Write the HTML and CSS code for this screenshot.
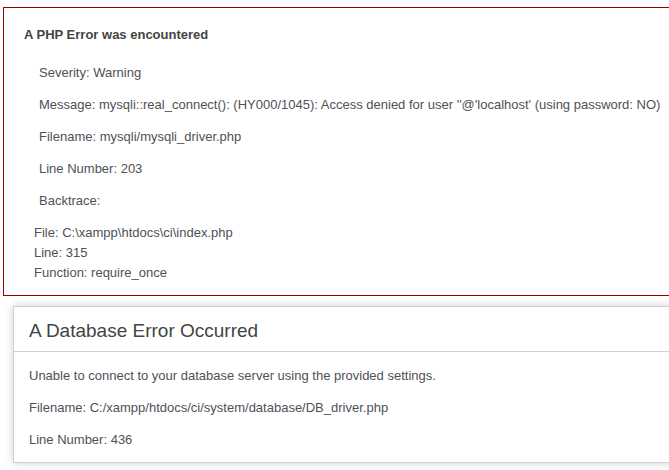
FILE: index.html
```html
<!DOCTYPE html>
<html>

<head>
    <meta charset="utf-8" />
    <title>Database Error</title>
    <link rel="stylesheet" href="styles.css">
</head>

<body>
    <div class="page">
        <div class="php-error">
            <h4>A PHP Error was encountered</h4>
            <p>Severity: Warning</p>
            <p>Message: mysqli::real_connect(): (HY000/1045): Access denied for user ''@'localhost' (using password: NO)</p>
            <p>Filename: mysqli/mysqli_driver.php</p>
            <p>Line Number: 203</p>
            <p>Backtrace:</p>
            <p class="trace-item">
                File: C:\xampp\htdocs\ci\index.php<br />
                Line: 315<br />
                Function: require_once
            </p>
        </div>
        <div id="container">
            <h1>A Database Error Occurred</h1>
            <p>Unable to connect to your database server using the provided settings.</p>
            <p>Filename: C:/xampp/htdocs/ci/system/database/DB_driver.php</p>
            <p>Line Number: 436</p>
        </div>
    </div>
</body>

</html>
```

FILE: styles.css
```css
html,
body {
    overflow: hidden;
}

body {
    background-color: #fff;
    margin: 7px 0 0 3px;
    font: 13px/20px "Liberation Sans", Arial, Helvetica, sans-serif;
    color: #4F5155;
}

.page {
    width: 720px;
}

.php-error {
    border: 1px solid #990000;
    padding-left: 20px;
    margin: 0 0 10px 0;
}

.php-error h4 {
    color: #444;
    margin: 17px 0 18px 0;
}

p {
    margin: 12px 15px 12px 15px;
}

.php-error .trace-item {
    margin-left: 10px;
}

h1 {
    color: #444;
    background-color: transparent;
    border-bottom: 1px solid #D0D0D0;
    font-size: 19px;
    font-weight: normal;
    margin: 0 0 14px 0;
    padding: 14px 15px 10px 15px;
}

#container {
    margin: 10px;
    border: 1px solid #D0D0D0;
    box-shadow: 0 0 8px #D0D0D0;
}
```
